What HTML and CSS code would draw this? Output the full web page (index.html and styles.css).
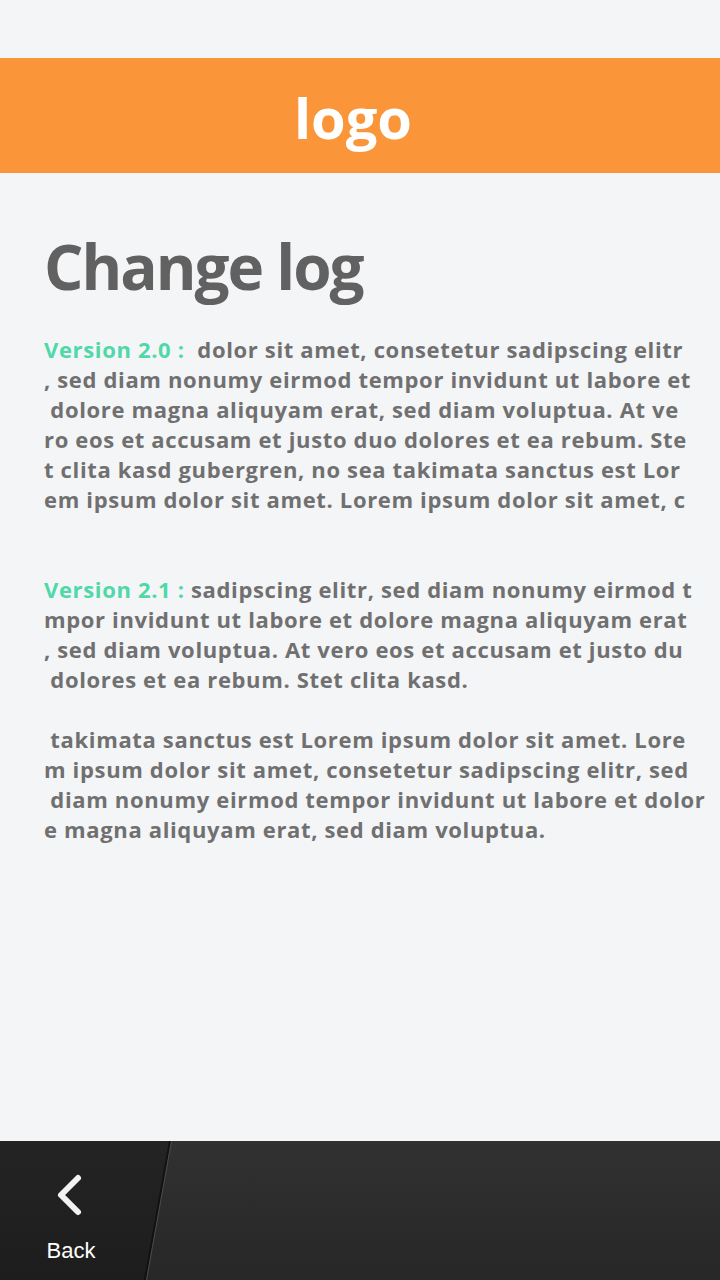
FILE: index.html
```html
<!DOCTYPE html>
<html>
<head>
<meta charset="utf-8">
<link rel="stylesheet" href="styles.css">
</head>
<body>
<div class="screen">
  <div class="status"></div>
  <header class="topbar"><span class="logo">logo</span></header>
  <main class="content">
    <h1 class="title">Change log</h1>
    <div class="log">
      <p class="entry"><span class="ver">Version 2.0 :</span>&nbsp; dolor sit amet, consetetur sadipscing elitr<br>, sed diam nonumy eirmod tempor invidunt ut labore et<br>&nbsp;dolore magna aliquyam erat, sed diam voluptua. At ve<br>ro eos et accusam et justo duo dolores et ea rebum. Ste<br>t clita kasd gubergren, no sea takimata sanctus est Lor<br>em ipsum dolor sit amet. Lorem ipsum dolor sit amet, c</p>
      <p class="entry gap2"><span class="ver">Version 2.1 :</span> sadipscing elitr, sed diam nonumy eirmod t<br>mpor invidunt ut labore et dolore magna aliquyam erat<br>, sed diam voluptua. At vero eos et accusam et justo du<br>&nbsp;dolores et ea rebum. Stet clita kasd.</p>
      <p class="entry gap1">&nbsp;takimata sanctus est Lorem ipsum dolor sit amet. Lore<br>m ipsum dolor sit amet, consetetur sadipscing elitr, sed<br>&nbsp;diam nonumy eirmod tempor invidunt ut labore et dolor<br>e magna aliquyam erat, sed diam voluptua.</p>
    </div>
  </main>
  <footer class="bottombar">
    <svg class="bar-bg" width="720" height="139" viewBox="0 0 720 139" aria-hidden="true">
      <defs>
        <linearGradient id="rg" x1="0" y1="0" x2="0" y2="1">
          <stop offset="0" stop-color="#313131"/>
          <stop offset="1" stop-color="#272727"/>
        </linearGradient>
        <linearGradient id="lg" x1="0" y1="0" x2="0" y2="1">
          <stop offset="0" stop-color="#242424"/>
          <stop offset="1" stop-color="#1d1d1d"/>
        </linearGradient>
      </defs>
      <rect x="0" y="0" width="720" height="139" fill="url(#rg)"/>
      <polygon points="0,0 170,0 145,139 0,139" fill="url(#lg)"/>
      <line x1="170" y1="0" x2="145" y2="139" stroke="#111" stroke-width="2"/>
      <line x1="171.5" y1="0" x2="146.5" y2="139" stroke="#4a4a4a" stroke-width="1"/>
    </svg>
    <a class="back" href="#">
      <svg class="chev" width="30" height="44" viewBox="0 0 30 44" aria-hidden="true">
        <polyline points="22,5 5,22 22,39" fill="none" stroke="#f2f2f2" stroke-width="6" stroke-linecap="round" stroke-linejoin="round"/>
      </svg>
      <span class="back-label">Back</span>
    </a>
  </footer>
</div>
</body>
</html>
```
FILE: styles.css
```css
html, body {
  margin: 0;
  padding: 0;
}
body {
  background: #f4f5f7;
  font-family: "Open Sans", "Noto Sans", sans-serif;
}
.screen {
  width: 720px;
  height: 1280px;
  display: flex;
  flex-direction: column;
  background: #f4f5f7;
  overflow: hidden;
}
.status {
  height: 58px;
  flex: none;
}
.topbar {
  height: 115px;
  flex: none;
  background: #fa9539;
  display: flex;
  align-items: center;
  justify-content: center;
}
.logo {
  color: #ffffff;
  font-family: "Open Sans", sans-serif;
  font-weight: 700;
  font-size: 56px;
  line-height: 1;
  letter-spacing: 0;
  margin-left: -14px;
  margin-top: 2px;
}
.content {
  flex: 1;
  padding: 0 0 0 44px;
}
.title {
  margin: 62px 0 0 0;
  font-size: 62px;
  line-height: 62px;
  font-weight: 700;
  color: #616161;
  letter-spacing: -2px;
}
.log {
  margin-top: 37px;
}
.entry {
  margin: 0;
  font-size: 22px;
  line-height: 30px;
  font-weight: 700;
  color: #707070;
  letter-spacing: 0.65px;
  white-space: nowrap;
}
.gap2 {
  margin-top: 60px;
}
.gap1 {
  margin-top: 30px;
}
.ver {
  color: #50d8a9;
}
.bottombar {
  position: relative;
  height: 139px;
  flex: none;
  display: flex;
  align-items: stretch;
}
.bar-bg {
  position: absolute;
  left: 0;
  top: 0;
}
.back {
  position: relative;
  width: 142px;
  display: flex;
  flex-direction: column;
  align-items: center;
  text-decoration: none;
  padding-top: 32px;
  box-sizing: border-box;
}
.chev {
  display: block;
}
.back-label {
  margin-top: 22px;
  font-family: "Liberation Sans", Arial, sans-serif;
  font-size: 22px;
  line-height: 24px;
  color: #ffffff;
}
```
